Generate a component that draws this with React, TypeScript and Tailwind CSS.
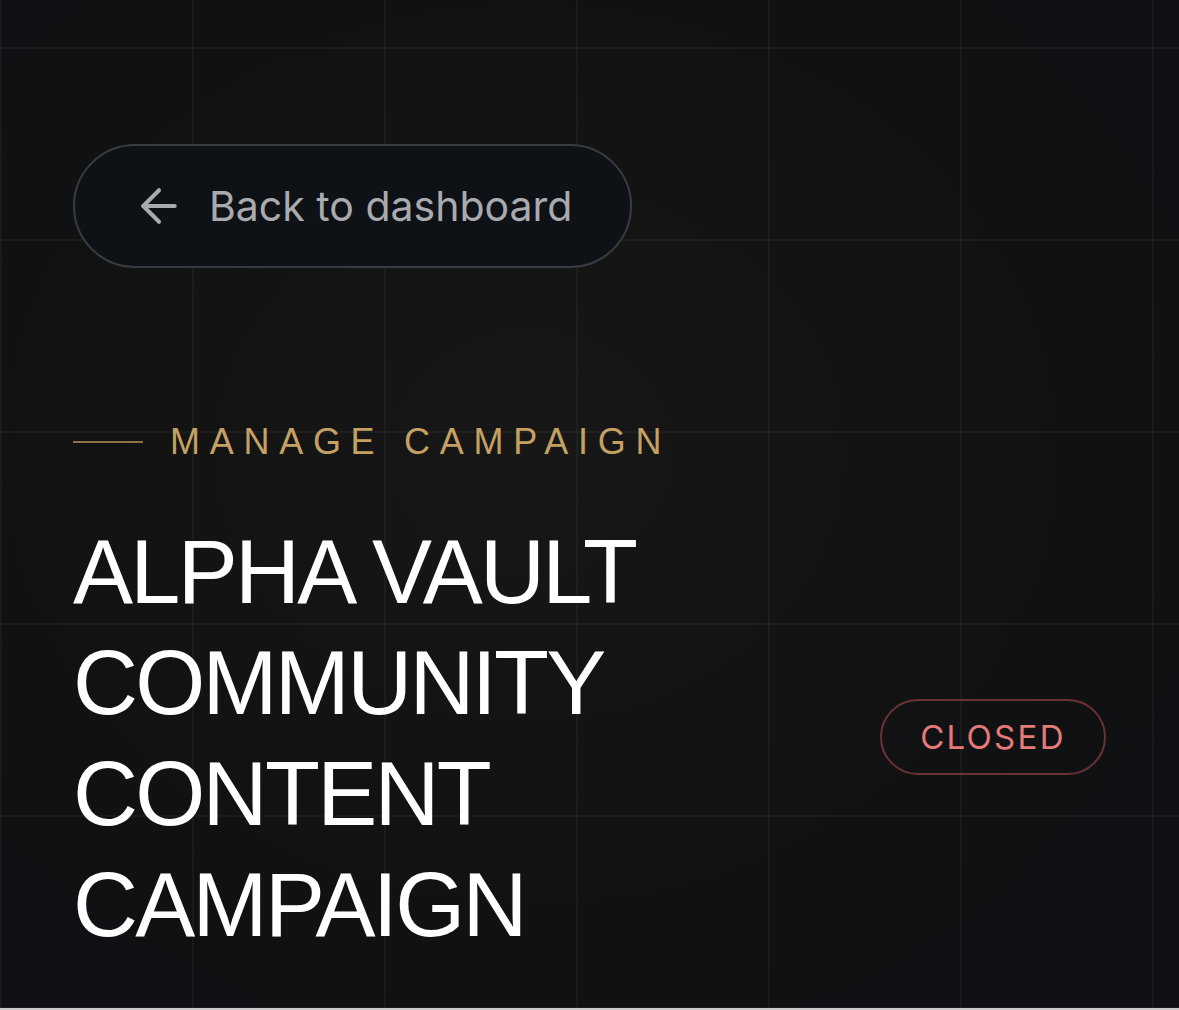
import React from "react";
import { ArrowLeft } from "lucide-react";

export default function App() {
  return (
    <div className="w-[1179px] bg-[#0f1013]">
      <div className="relative h-[1008px] overflow-hidden bg-[radial-gradient(ellipse_at_45%_45%,#171717_0%,#131313_40%,#0f1013_80%)]">
        <div className="pointer-events-none absolute inset-0 [background-image:linear-gradient(to_right,rgba(255,255,255,0.04)_2px,transparent_2px),linear-gradient(to_bottom,rgba(255,255,255,0.04)_2px,transparent_2px)] [background-size:192px_192px] [background-position:192px_47px]" />
        <div className="relative flex flex-col px-[73px] pt-[144px]">
          <button className="flex h-[124px] w-[559px] items-center gap-[33px] rounded-full border-2 border-[#383b40] bg-[#0e1216] pl-[66px] font-['Inter',sans-serif] text-[41px] text-[#a9aaae]">
            <ArrowLeft size={54} strokeWidth={1.8} className="-ml-[9px] -mr-[10px]" />
            <span className="leading-none">Back to dashboard</span>
          </button>

          <div className="mt-[156px] flex items-center gap-[27px]">
            <div className="h-[2px] w-[70px] bg-[#8c7347]" />
            <span className="font-['Liberation_Sans',Arial,sans-serif] text-[36px] leading-[36px] tracking-[0.27em] text-[#c4a162]">
              MANAGE CAMPAIGN
            </span>
          </div>

          <div className="mt-[57px] flex items-center justify-between">
            <h1 className="font-['Liberation_Sans',Arial,sans-serif] text-[90px] font-normal leading-[111px] tracking-[-0.03em] text-white">
              ALPHA VAULT
              <br />
              COMMUNITY
              <br />
              CONTENT
              <br />
              CAMPAIGN
            </h1>
            <div className="mt-[-4px] flex h-[76px] w-[226px] items-center justify-center rounded-full border-2 border-[#6a3234] font-['Inter',sans-serif] text-[33px] leading-none tracking-[0.07em] text-[#e57b79]">
              CLOSED
            </div>
          </div>
        </div>
      </div>
      <div className="h-[2px] bg-[#c9c9c9]" />
    </div>
  );
}
